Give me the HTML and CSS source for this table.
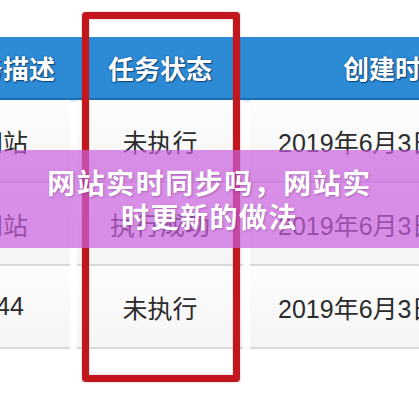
FILE: index.html
```html
<!DOCTYPE html>
<html lang="zh-CN">
<head>
<meta charset="utf-8">
<link rel="stylesheet" href="styles.css">
</head>
<body>
<div class="stage">
  <div class="table">
    <div class="thead">
      <div class="th c1">任务描述</div>
      <div class="th c2">任务状态</div>
      <div class="th c3">创建时间</div>
    </div>
    <div class="tr">
      <div class="td c1">网站</div>
      <div class="td c2">未执行</div>
      <div class="td c3">2019年6月3日 10:22</div>
    </div>
    <div class="tr">
      <div class="td c1">网站</div>
      <div class="td c2">执行成功</div>
      <div class="td c3">2019年6月3日 10:22</div>
    </div>
    <div class="tr">
      <div class="td c1">144</div>
      <div class="td c2">未执行</div>
      <div class="td c3">2019年6月3日 10:22</div>
    </div>
  </div>
  <div class="highlight"></div>
  <div class="banner">
    <h1 class="banner-title">网站实时同步吗，网站实时更新的做法</h1>
  </div>
</div>
</body>
</html>
```

FILE: styles.css
```css
html, body {
  margin: 0;
  padding: 0;
  background: #ffffff;
}
.stage {
  position: relative;
  width: 419px;
  height: 400px;
  overflow: hidden;
  background: #ffffff;
  font-family: "Liberation Sans", "Noto Sans CJK SC", sans-serif;
}
.table {
  margin-left: -64px;
  padding-top: 37px;
  width: 604px;
}
.thead {
  display: grid;
  grid-template-columns: 134px 166px 290px;
  column-gap: 7px;
  height: 61px;
  background: #2d8bd6;
  border-bottom: 2px solid #1d6cae;
  box-shadow: 0 2px 0 #d7ebf8;
}
.th {
  display: flex;
  align-items: center;
  justify-content: center;
  color: #ffffff;
  font-family: "Noto Sans CJK SC", sans-serif;
  font-weight: 700;
  font-size: 26px;
  text-shadow: 0 0 2px #0e4d85, 1px 1px 1px #0c4273;
}
.th.c3 { padding-right: 0; }
.tr {
  display: grid;
  grid-template-columns: 134px 166px 290px;
  column-gap: 7px;
  height: 83px;
}
.td {
  display: flex;
  align-items: center;
  justify-content: center;
  background: linear-gradient(#fdfdfd, #f5f5f5);
  border-bottom: 2px solid #d9d9d9;
  box-sizing: border-box;
  color: #2b2b2b;
  font-size: 25px;
  white-space: nowrap;
}
.td.c3 { padding-right: 6px; }
.tr:first-of-type .td { border-top: 2px solid #ffffff; }
.highlight {
  position: absolute;
  left: 82px;
  top: 12px;
  width: 158px;
  height: 370px;
  box-sizing: border-box;
  border: 7px solid #c4161d;
  border-radius: 4px;
  box-shadow: inset 0 0 1px #8a0a0e, 0 0 1px #8a0a0e;
}
.banner {
  position: absolute;
  left: 0;
  top: 150px;
  width: 419px;
  height: 98px;
  display: flex;
  align-items: center;
  justify-content: center;
  padding: 0 40px;
  box-sizing: border-box;
  background: rgba(201, 95, 222, 0.7);
}
.banner-title {
  margin: 0;
  text-align: center;
  color: #ffffff;
  font-family: "Noto Sans CJK SC", sans-serif;
  font-weight: 700;
  font-size: 28px;
  letter-spacing: 1.5px;
  line-height: 34px;
  text-shadow: 1px 1px 2px rgba(80, 20, 90, 0.35);
}
```
